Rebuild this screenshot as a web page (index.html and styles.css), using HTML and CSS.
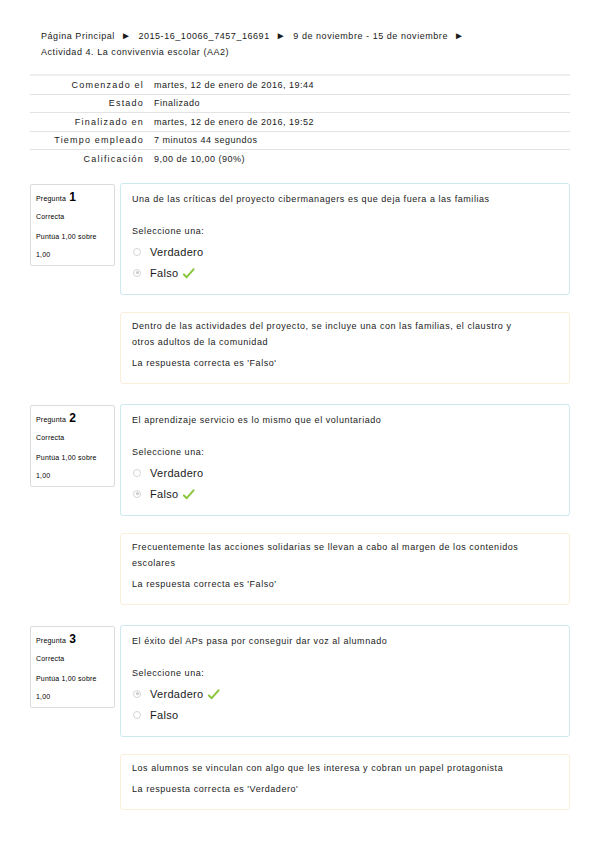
FILE: index.html
```html
<!DOCTYPE html>
<html lang="es">
<head>
<meta charset="utf-8">
<title>Actividad 4. La convivenvia escolar (AA2)</title>
<link rel="stylesheet" href="styles.css">
</head>
<body>
<div class="page">
  <nav class="crumbs">
    <div>Página Principal <span class="arr">►</span> 2015-16_10066_7457_16691 <span class="arr">►</span> 9 de noviembre - 15 de noviembre <span class="arr">►</span></div>
    <div>Actividad 4. La convivenvia escolar (AA2)</div>
  </nav>

  <table class="summary">
    <tr><th>Comenzado el</th><td>martes, 12 de enero de 2016, 19:44</td></tr>
    <tr><th>Estado</th><td>Finalizado</td></tr>
    <tr><th>Finalizado en</th><td>martes, 12 de enero de 2016, 19:52</td></tr>
    <tr><th>Tiempo empleado</th><td>7 minutos 44 segundos</td></tr>
    <tr class="last"><th>Calificación</th><td>9,00 de 10,00 (90%)</td></tr>
  </table>

  <div class="que">
    <div class="info">
      <div class="qno">Pregunta <b>1</b></div>
      <div class="st">Correcta</div>
      <div class="gr">Puntúa 1,00 sobre 1,00</div>
    </div>
    <div class="qcol">
      <div class="formulation">
        <div class="qtext">Una de las críticas del proyecto cibermanagers es que deja fuera a las familias</div>
        <div class="prompt">Seleccione una:</div>
        <div class="opts">
          <div class="opt"><span class="radio"></span><span>Verdadero</span></div>
          <div class="opt"><span class="radio on"></span><span>Falso</span><svg class="tick" viewBox="0 0 14 12" width="13" height="11"><path d="M2 7 L5 10 L12.5 1.5" fill="none" stroke="#8cc63f" stroke-width="2.2" stroke-linecap="round" stroke-linejoin="round"/></svg></div>
        </div>
      </div>
      <div class="outcome">
        <div class="fb">Dentro de las actividades del proyecto, se incluye una con las familias, el claustro y<br>otros adultos de la comunidad</div>
        <div class="right">La respuesta correcta es 'Falso'</div>
      </div>
    </div>
  </div>

  <div class="que">
    <div class="info">
      <div class="qno">Pregunta <b>2</b></div>
      <div class="st">Correcta</div>
      <div class="gr">Puntúa 1,00 sobre 1,00</div>
    </div>
    <div class="qcol">
      <div class="formulation">
        <div class="qtext">El aprendizaje servicio es lo mismo que el voluntariado</div>
        <div class="prompt">Seleccione una:</div>
        <div class="opts">
          <div class="opt"><span class="radio"></span><span>Verdadero</span></div>
          <div class="opt"><span class="radio on"></span><span>Falso</span><svg class="tick" viewBox="0 0 14 12" width="13" height="11"><path d="M2 7 L5 10 L12.5 1.5" fill="none" stroke="#8cc63f" stroke-width="2.2" stroke-linecap="round" stroke-linejoin="round"/></svg></div>
        </div>
      </div>
      <div class="outcome">
        <div class="fb">Frecuentemente las acciones solidarias se llevan a cabo al margen de los contenidos<br>escolares</div>
        <div class="right">La respuesta correcta es 'Falso'</div>
      </div>
    </div>
  </div>

  <div class="que">
    <div class="info">
      <div class="qno">Pregunta <b>3</b></div>
      <div class="st">Correcta</div>
      <div class="gr">Puntúa 1,00 sobre 1,00</div>
    </div>
    <div class="qcol">
      <div class="formulation">
        <div class="qtext">El éxito del APs pasa por conseguir dar voz al alumnado</div>
        <div class="prompt">Seleccione una:</div>
        <div class="opts">
          <div class="opt"><span class="radio on"></span><span>Verdadero</span><svg class="tick" viewBox="0 0 14 12" width="13" height="11"><path d="M2 7 L5 10 L12.5 1.5" fill="none" stroke="#8cc63f" stroke-width="2.2" stroke-linecap="round" stroke-linejoin="round"/></svg></div>
          <div class="opt"><span class="radio"></span><span>Falso</span></div>
        </div>
      </div>
      <div class="outcome">
        <div class="fb">Los alumnos se vinculan con algo que les interesa y cobran un papel protagonista</div>
        <div class="right">La respuesta correcta es 'Verdadero'</div>
      </div>
    </div>
  </div>
</div>
</body>
</html>
```

FILE: styles.css
```css
html, body {
  margin: 0;
  padding: 0;
  background: #fff;
}
body {
  font-family: "Liberation Sans", Arial, sans-serif;
  color: #1a1a1a;
  font-size: 9px;
  letter-spacing: 0.55px;
}
.page {
  width: 540px;
  margin-left: 30px;
  padding-top: 28px;
}
.crumbs {
  padding-left: 11px;
  line-height: 16px;
  height: 32px;
  padding-bottom: 14px;
  border-bottom: 2px solid #eeeeee;
}
.crumbs .arr {
  font-size: 10px;
  margin: 0 4px 0 3px;
}
.summary {
  width: 540px;
  border-collapse: collapse;
  margin-bottom: 15.5px;
}
.summary th, .summary td {
  height: 17.5px;
  padding: 0;
  border-bottom: 1px solid #e3e3e3;
  font-weight: normal;
  vertical-align: middle;
}
.summary tr.last th, .summary tr.last td {
  border-bottom: none;
}
.summary th {
  width: 114px;
  text-align: right;
  padding-right: 10px;
  letter-spacing: 1.2px;
}
.summary td {
  text-align: left;
  letter-spacing: 0.5px;
}
.que {
  display: flex;
  gap: 5px;
  margin-bottom: 20px;
}
.info {
  width: 78px;
  height: 77px;
  flex: none;
  border: 1px solid #dcdcdc;
  border-radius: 2px;
  padding: 3px 0 0 5px;
  font-size: 7px;
  line-height: 10px;
  margin-top: 1px;
  letter-spacing: 0.2px;
  color: #000;
}
.qno {
  margin-top: 4px;
}
.qno b {
  font-size: 12px;
  font-weight: bold;
  margin-left: 1px;
}
.st {
  margin-top: 8px;
}
.gr {
  margin-top: 6px;
  line-height: 18px;
  width: 72px;
}
.qcol {
  flex: 1;
  display: flex;
  flex-direction: column;
  gap: 17px;
}
.formulation {
  border: 1px solid #cce9f0;
  border-radius: 3px;
  padding: 9px 11px 0 11px;
  box-sizing: border-box;
  height: 112px;
}
.qtext {
  line-height: 12px;
}
.prompt {
  margin-top: 20px;
  line-height: 12px;
}
.opts {
  margin-top: 4px;
}
.opt {
  display: flex;
  align-items: center;
  font-size: 11px;
  letter-spacing: 0.3px;
  height: 21px;
  margin-left: 1px;
}
.radio {
  width: 8px;
  height: 8px;
  border: 1px solid #d5d5d5;
  border-radius: 50%;
  box-sizing: border-box;
  margin-right: 9px;
  position: relative;
  flex: none;
}
.radio.on::after {
  content: "";
  position: absolute;
  left: 1.5px;
  top: 1.5px;
  width: 3px;
  height: 3px;
  border-radius: 50%;
  background: #c8c8c8;
}
.tick {
  margin-left: 4px;
  margin-top: 2px;
}
.outcome {
  border: 1px solid #fbefdc;
  border-radius: 3px;
  padding: 5px 11px 12px 11px;
  line-height: 16px;
}
.right {
  margin-top: 5px;
}
```
